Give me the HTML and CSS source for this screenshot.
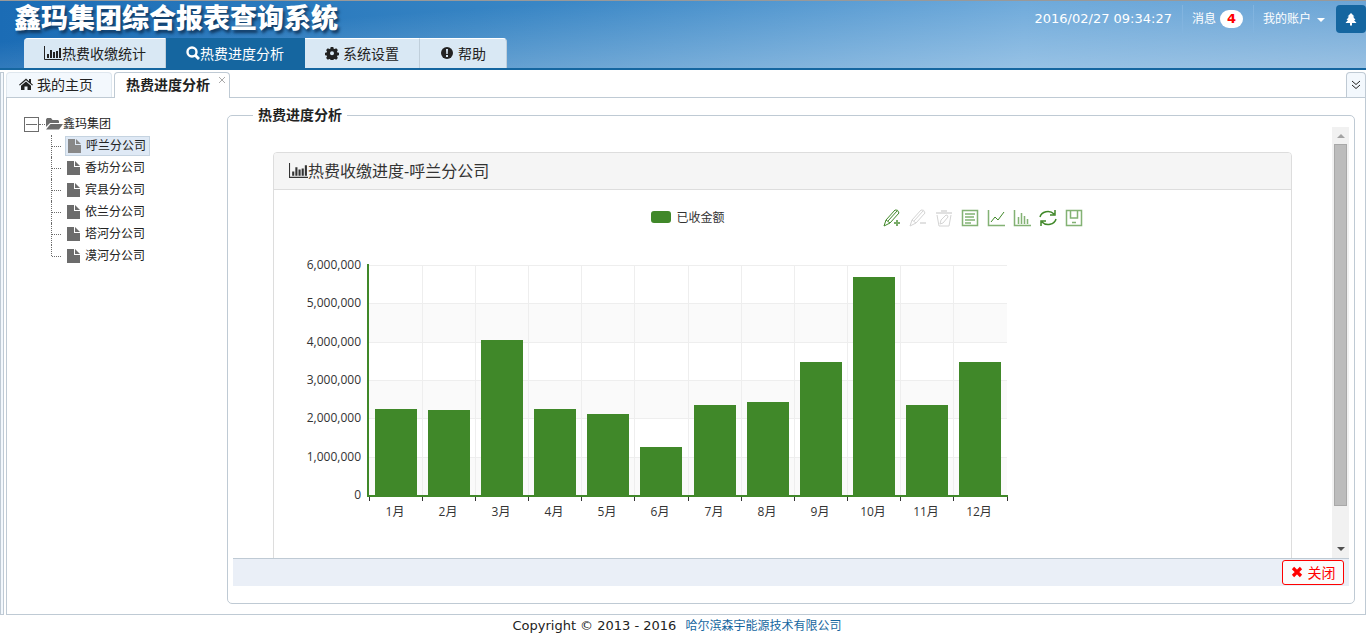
FILE: index.html
```
<!DOCTYPE html>
<html lang="zh-CN">
<head>
    <meta charset="UTF-8">
    <meta name="viewport" content="width=device-width, initial-scale=1.0">
    <title>鑫玛集团综合报表查询系统</title>
    <link rel="stylesheet" href="styles.css">
</head>
<body>
    <!-- shared icons -->
    <svg class="sprite" aria-hidden="true">
        <symbol id="i-chart" viewBox="0 0 18 14"><path d="M.5 0v13.5H18" fill="none" stroke="currentColor"/><path d="M3 8h2v4H3zM6 4h2v8H6zM9 6h2v6H9zM12 5h2v7h-2zM15 2h2v10h-2z"/></symbol>
        <symbol id="i-search" viewBox="0 0 14 14"><path d="M9 9l4 4" stroke="currentColor" stroke-width="3"/><circle cx="6" cy="6" r="4.500" fill="none" stroke="currentColor" stroke-width="2.400"/></symbol>
        <symbol id="i-cog" viewBox="0 0 14 14"><path fill-rule="evenodd" d="M5.700 1h2.600l.4 1.700 1 .4 1.500-.9 1.700 1.700-.9 1.500.4 1 1.600.3v2.600l-1.600.3-.4 1 .9 1.500-1.700 1.700-1.500-.9-1 .4-.4 1.700H5.700l-.4-1.700-1-.4-1.500.9-1.700-1.700.9-1.500-.4-1L0 9.300V6.700l1.600-.3.4-1-.9-1.500 1.700-1.700 1.500.9 1-.4zM7 5.300a2 2 0 1 0 0 4 2 2 0 0 0 0-4z"/></symbol>
        <symbol id="i-warn" viewBox="0 0 14 14"><circle cx="7" cy="7" r="6"/><path d="M6 3h2l-.3 5H6.300zM6 9h2v2H6z" fill="#d9e8f4"/></symbol>
        <symbol id="i-home" viewBox="0 0 14 14"><path d="M7 1.500L10 4.200V2h2v4l2 1.800-.8.8L7 3.300.8 8.600 0 7.800z"/><path d="M7 4.500l5 4.200V13H8.500V9.500h-3V13H2V8.700z"/></symbol>
        <symbol id="i-folder" viewBox="0 0 18 14"><path d="M1 10V2.500L2 1h4l1.500 2H13l1 1v2H5z"/><path d="M5.500 7H18l-4 5.500H1z"/></symbol>
        <symbol id="i-file" viewBox="0 0 14 16"><path d="M0 1h7v6h6v8H0z"/><path d="M8 1l5 5H8z"/></symbol>
        <symbol id="i-tree" viewBox="0 0 14 14"><path d="M7 1l3.500 3.500H9L11.500 8H10l2.500 3H8v2.500H6V11H1.500L4 8H2.500L5 4.500H3.500z"/></symbol>
        <symbol id="i-times" viewBox="0 0 12 12"><path d="M2 2l8 8M10 2l-8 8" stroke="currentColor" stroke-width="3.200"/></symbol>
    </svg>

    <header class="header">
        <div class="brand">鑫玛集团综合报表查询系统</div>
        <div class="userbar">
            <span class="clock">2016/02/27 09:34:27</span>
            <a class="user-item" href="#">消息 <span class="badge">4</span></a>
            <a class="user-item" href="#">我的账户 <span class="caret"></span></a>
            <button class="theme-btn" type="button" aria-label="主题"><svg class="icon"><use href="#i-tree"/></svg></button>
        </div>
        <nav class="nav">
            <a class="tight" href="#"><svg class="icon wide"><use href="#i-chart"/></svg>热费收缴统计</a>
            <a class="tight active" href="#"><svg class="icon"><use href="#i-search"/></svg>热费进度分析</a>
            <a href="#"><svg class="icon"><use href="#i-cog"/></svg>系统设置</a>
            <a href="#"><svg class="icon"><use href="#i-warn"/></svg>帮助</a>
        </nav>
    </header>

    <main class="main">
        <div class="splitter"></div>
        <div class="workspace">
            <div class="tabs">
                <a class="tab" href="#"><svg class="icon"><use href="#i-home"/></svg>我的主页</a>
                <a class="tab current" href="#">热费进度分析<svg class="tab-close" viewBox="0 0 8 8"><path d="M1 1l6 6M7 1L1 7"/></svg></a>
                <button class="tabs-more" type="button" aria-label="更多"><svg viewBox="0 0 10 10"><path d="M1 1l4 3.500L9 1M1 5l4 3.500L9 5"/></svg></button>
            </div>

            <div class="content">
                <div class="tree">
                    <div class="tree-root">
                        <button class="toggle" type="button" aria-label="折叠"></button>
                        <span class="dots"></span>
                        <svg class="icon wide"><use href="#i-folder"/></svg>鑫玛集团
                    </div>
                    <ul>
                        <li><a class="selected" href="#"><svg class="file"><use href="#i-file"/></svg>呼兰分公司</a></li>
                        <li><a href="#"><svg class="file"><use href="#i-file"/></svg>香坊分公司</a></li>
                        <li><a href="#"><svg class="file"><use href="#i-file"/></svg>宾县分公司</a></li>
                        <li><a href="#"><svg class="file"><use href="#i-file"/></svg>依兰分公司</a></li>
                        <li><a href="#"><svg class="file"><use href="#i-file"/></svg>塔河分公司</a></li>
                        <li><a href="#"><svg class="file"><use href="#i-file"/></svg>漠河分公司</a></li>
                    </ul>
                </div>

                <fieldset class="report">
                    <legend>热费进度分析</legend>
                    <div class="report-body">
                        <div class="scroll-area">
                            <section class="panel">
                                <h3><svg class="icon-lg"><use href="#i-chart"/></svg>热费收缴进度-呼兰分公司</h3>
                                <div class="panel-body">
                                    <div class="chart">
                                        <div class="chart-head">
                                            <div class="legend"><span class="swatch"></span>已收金额</div>
                                            <div class="toolbox">
                                                <button type="button" aria-label="辅助线"><svg viewBox="0 0 18 18"><path d="M1 17l2-6L12 1q3-1 4 3L7 14zM3 11l4 3M5 12l9-10"/><path class="bold" d="M14 11v6M11 14h6"/></svg></button>
                                                <button class="off" type="button" aria-label="删除辅助线"><svg viewBox="0 0 18 18"><path d="M1 17l2-6L12 1q3-1 4 3L7 14zM3 11l4 3M5 12l9-10"/><path class="bold" d="M11 14h6"/></svg></button>
                                                <button class="off" type="button" aria-label="清空辅助线"><svg viewBox="0 0 18 18"><path class="bold" d="M1 4h16M6 2h6"/><path d="M2 6l2 11h10l2-11M5 15l1-4 5-5q2 0 2 2l-5 6z"/></svg></button>
                                                <button type="button" aria-label="数据视图"><svg viewBox="0 0 18 18"><path class="soft" d="M1.500 1.500h15v15h-15zM4 5h10M4 8h9M4 11h10M4 14h6"/></svg></button>
                                                <button type="button" aria-label="折线图"><svg viewBox="0 0 18 18"><path class="soft" d="M1.500 1v15.500H18"/><path d="M4 13l4-5 3 3 6-8"/></svg></button>
                                                <button type="button" aria-label="柱状图"><svg viewBox="0 0 18 18"><path class="soft" d="M1.500 1v15.500H18M5.500 8v7M8.500 4v11M11.500 7v8M14.500 10v5"/></svg></button>
                                                <button type="button" aria-label="还原"><svg viewBox="0 0 18 18"><path class="mid" d="M1 8a8 7 0 0 1 14-3M16 1v5h-5M17 10a8 7 0 0 1-14 3M2 17v-5h5"/></svg></button>
                                                <button type="button" aria-label="保存"><svg viewBox="0 0 18 18"><path class="soft" d="M1.500 1.500h15v15h-15zM5.500 2v7h7V2M7 13.500h4"/></svg></button>
                                            </div>
                                        </div>
                                        <svg id="plot" class="plot" viewBox="0 0 800 320"></svg>
                                    </div>
                                </div>
                            </section>
                        </div>
                        <div class="scrollbar"><i class="up"></i><div class="thumb"></div><i class="down"></i></div>
                    </div>
                    <div class="actions">
                        <button class="btn-close" type="button"><svg><use href="#i-times"/></svg>关闭</button>
                    </div>
                </fieldset>
            </div>
        </div>
    </main>

    <footer class="footer">Copyright © 2013 - 2016 <a href="#">哈尔滨森宇能源技术有限公司</a></footer>

    <script src="chart.js"></script>
</body>
</html>
```
FILE: styles.css
```
* {
    box-sizing: border-box;
}

body {
    margin: 0;
    min-height: 100vh;
    display: flex;
    flex-direction: column;
    font-family: "DejaVu Sans", "Noto Sans CJK SC", sans-serif;
    font-size: 12px;
    color: #222;
    background: #fff;
}

a {
    color: inherit;
    text-decoration: none;
}

button {
    font: inherit;
    padding: 0;
    cursor: pointer;
}

svg {
    fill: currentColor;
    flex: none;
}

.sprite {
    display: none;
}

.icon {
    width: 14px;
    height: 14px;
}

.icon.wide {
    width: 18px;
}

/* Header */
.header {
    height: 70px;
    display: grid;
    grid-template: 37px 30px / 1fr auto;
    border-top: 1px solid #999;
    border-bottom: 2px solid #1566a0;
    background:
        linear-gradient(356deg, rgba(255, 255, 255, 0.45), rgba(255, 255, 255, 0) 75%),
        linear-gradient(to right, #1b6cb5, #3583c3 35%, #5c9fd6 75%, #468ecb);
}

.brand {
    padding: 1px 0 0 14px;
    font-size: 27px;
    font-weight: 900;
    line-height: 34px;
    color: #fff;
    text-shadow: 2px 3px 3px #123a62;
    white-space: nowrap;
}

.userbar {
    display: flex;
    height: 28px;
    margin-top: 4px;
    line-height: 28px;
    color: #fff;
}

.clock {
    font-size: 13px;
    padding-right: 10px;
}

.user-item {
    display: flex;
    align-items: center;
    gap: 4px;
    padding: 0 10px 0 9px;
    border-left: 1px solid #82b4df;
}

.user-item:nth-of-type(2) {
    padding-right: 11px;
}

.badge {
    width: 23px;
    height: 18px;
    border-radius: 9px;
    background: #fff;
    color: #f00;
    font-size: 13px;
    font-weight: bold;
    line-height: 18px;
    text-align: center;
}

.caret {
    margin: 2px 0 0 2px;
    border: 4px solid transparent;
    border-top-color: #fff;
    border-bottom: 0;
}

.theme-btn {
    width: 30px;
    display: flex;
    align-items: center;
    justify-content: center;
    border: 0;
    border-radius: 4px;
    background: #1566a0;
    color: #fff;
}

.nav {
    grid-column: 1 / 3;
    display: flex;
    padding-left: 24px;
    font-size: 14px;
}

.nav a {
    display: flex;
    align-items: center;
    gap: 4px;
    padding: 0 20px 2px;
    border-top: 1px solid #fff;
    border-right: 1px solid #c0cfdb;
    background: #d9e8f4;
}

.nav a.tight {
    gap: 0;
}

.nav a:first-child {
    padding-right: 19px;
    border-radius: 4px 0 0 0;
}

.nav a:last-child {
    border-radius: 0 4px 0 0;
}

.nav a.active {
    border-color: #1566a0;
    background: #1566a0;
    color: #fff;
}

/* Workspace */
.main {
    flex: 1;
    display: flex;
    gap: 2px;
    padding-top: 2px;
}

.splitter {
    width: 4px;
    border: 1px solid #bfcad4;
    background: #f3f8fd;
}

.workspace {
    flex: 1;
    min-width: 0;
    display: flex;
    flex-direction: column;
}

.tabs {
    display: flex;
    gap: 2px;
    height: 26px;
    border-bottom: 1px solid #bfcad4;
    font-size: 14px;
}

.tab {
    position: relative;
    display: flex;
    align-items: center;
    gap: 4px;
    padding: 0 18px 2px 12px;
    border: 1px solid #dfe7ee;
    border-bottom: 0;
    border-radius: 4px 4px 0 0;
    background: #f3f8fd;
}

.tab.current {
    margin-bottom: -1px;
    padding: 0 19px 3px 11px;
    border-color: #bfcad4;
    background: #fff;
    font-weight: bold;
}

.tab-close {
    position: absolute;
    top: 3px;
    right: 3px;
    width: 8px;
    height: 8px;
    stroke: #aaa;
}

.tabs-more {
    width: 20px;
    margin-left: auto;
    border: 1px solid #bfcad4;
    border-bottom: 0;
    border-radius: 4px 4px 0 0;
    background: #f3f8fd;
}

.tabs-more svg {
    width: 10px;
    height: 10px;
    fill: none;
    stroke: #222;
}

.content {
    flex: 1;
    display: flex;
    padding: 9px 10px 10px 16px;
    border: 1px solid #bfcad4;
    border-top: 0;
}

/* Tree */
.tree {
    width: 204px;
    padding-top: 6px;
    line-height: 22px;
}

.tree svg {
    color: #6c6c6c;
}

.tree-root {
    display: flex;
    align-items: center;
}

.toggle {
    width: 15px;
    height: 15px;
    margin-left: 1px;
    border: 1px solid #6c6c6c;
    background: linear-gradient(#6c6c6c, #6c6c6c) center / 11px 1px no-repeat #fff;
}

.dots {
    width: 6px;
    border-top: 1px dotted #6c6c6c;
}

.tree ul {
    margin: 0 0 0 28px;
    padding: 0;
    list-style: none;
}

.tree li {
    display: flex;
    align-items: center;
    height: 22px;
    border-left: 1px dotted #6c6c6c;
}

.tree li:last-child {
    border-left: 0;
    padding-left: 1px;
    background: repeating-linear-gradient(#6c6c6c 0 1px, #fff 1px 2px) left top / 1px 11px no-repeat;
}

.tree li::before {
    content: "";
    width: 9px;
    margin-right: 4px;
    border-top: 1px dotted #6c6c6c;
}

.tree a {
    display: flex;
    align-items: center;
    gap: 4px;
    height: 20px;
    padding: 0 4px 0 2px;
}

.tree a.selected {
    padding: 0 3px 0 2px;
    border: 1px solid #c5d3e0;
    background: #dfe9f5;
}

.file {
    width: 14px;
    height: 16px;
}

.tree .selected .file {
    color: #888;
}

/* Report */
.report {
    flex: 1;
    min-width: 0;
    display: flex;
    flex-direction: column;
    margin: 0;
    padding: 4px 5px 17px;
    border: 1px solid #bfcad4;
    border-radius: 5px;
}

.report legend {
    margin-left: 20px;
    padding: 0 5px;
    height: 16px;
    font-size: 14px;
    font-weight: bold;
    line-height: 16px;
}

.report-body {
    flex: 1 1 0;
    min-height: 360px;
    display: flex;
    overflow: hidden;
}

.scroll-area {
    flex: 1;
    min-width: 0;
    padding: 25px 40px 0;
}

.panel {
    border: 1px solid #ddd;
    border-radius: 4px;
    color: #333;
}

.panel h3 {
    display: flex;
    align-items: center;
    height: 37px;
    margin: 0;
    padding: 0 0 2px 15px;
    border-bottom: 1px solid #ddd;
    border-radius: 3px 3px 0 0;
    background: #f5f5f5;
    font-family: "Open Sans", "Noto Sans CJK SC", sans-serif;
    font-size: 16px;
    font-weight: normal;
}

.icon-lg {
    width: 19px;
    height: 15px;
}

.panel-body {
    padding: 15px;
}

.chart {
    width: 800px;
    padding-bottom: 60px;
    font-family: "Open Sans", "Noto Sans CJK SC", sans-serif;
}

.chart-head {
    display: grid;
    grid-template-columns: 1fr auto 1fr;
    align-items: center;
    height: 24px;
    padding: 0 6px 0 4px;
}

.legend {
    grid-column: 2;
    display: flex;
    align-items: center;
    gap: 5px;
}

.swatch {
    width: 20px;
    height: 12px;
    border-radius: 3px;
    background: #408829;
}

.toolbox {
    display: flex;
    justify-content: flex-end;
    gap: 8px;
}

.toolbox button {
    width: 18px;
    height: 18px;
    margin-top: 2px;
    border: 0;
    background: none;
    color: #408829;
}

.toolbox .off {
    color: #d4d4d4;
}

.toolbox svg {
    display: block;
    width: 18px;
    height: 18px;
    fill: none;
    stroke: currentColor;
}

.toolbox .bold {
    stroke-width: 2;
    opacity: 0.7;
}

.toolbox .mid {
    stroke-width: 1.5;
}

.toolbox .soft {
    stroke-width: 1.5;
    opacity: 0.65;
}

.plot {
    display: block;
    width: 800px;
    height: 320px;
    font-size: 12px;
}

.plot .band {
    fill: #fafafa;
}

.plot .grid {
    fill: #eee;
}

.plot .bar,
.plot .axis {
    fill: #408829;
}

.plot .tick,
.plot text {
    fill: #333;
}

.scrollbar {
    width: 17px;
    display: flex;
    flex-direction: column;
    align-items: center;
    background: #f1f1f1;
}

.scrollbar i {
    margin: 7px 0 6px;
    border: 4px solid transparent;
}

.scrollbar .up {
    border-top: 0;
    border-bottom-color: #a3a3a3;
}

.scrollbar .down {
    margin-top: auto;
    margin-bottom: 7px;
    border-bottom: 0;
    border-top-color: #505050;
}

.thumb {
    width: 13px;
    height: 84%;
    border: 1px solid #a8a8a8;
    background: #bcbcbc;
}

.actions {
    display: flex;
    justify-content: flex-end;
    height: 28px;
    padding: 1px 5px 0 0;
    border-top: 1px solid #bfcad4;
    background: #eaeff7;
}

.btn-close {
    display: flex;
    align-items: center;
    justify-content: center;
    gap: 5px;
    width: 62px;
    height: 25px;
    padding-bottom: 1px;
    border: 1px solid #f00;
    border-radius: 3px;
    background: #fbfbfb;
    color: #f00;
    font-size: 14px;
}

.btn-close svg {
    width: 12px;
    height: 12px;
}

.footer {
    height: 20px;
    padding-right: 12px;
    font-size: 13px;
    line-height: 22px;
    text-align: center;
}

.footer a {
    margin-left: 5px;
    color: #1566a0;
    font-size: 12px;
}
```
FILE: chart.js
```
const data = [2243000, 2230000, 4043000, 2243000, 2126000, 1240000, 2348000, 2426000, 3457000, 5674000, 2348000, 3457000];
const plot = document.getElementById('plot');
const left = 80, top0 = 36, width = 638, height = 230, max = 6000000;

function add(tag, attrs, text) {
    const el = document.createElementNS('http://www.w3.org/2000/svg', tag);
    for (const key in attrs) el.setAttribute(key, attrs[key]);
    if (text) el.textContent = text;
    plot.appendChild(el);
}

function rect(cls, x, y, w, h) {
    add('rect', { class: cls, x: x, y: y, width: w, height: h });
}

const rowY = n => top0 + Math.round(height * (6 - n) / 6);
const colX = n => left + Math.floor(width * n / 12);

// bands, horizontal lines and value labels
for (let n = 0; n <= 6; n++) {
    if (n % 2 === 1) rect('band', left, rowY(n), width, rowY(n - 1) - rowY(n));
    rect('grid', left, rowY(n), width, 1);
    add('text', { x: left - 8, y: rowY(n) + 4, 'text-anchor': 'end' }, (n * 1000000).toLocaleString('en-US'));
}

for (let n = 1; n < 12; n++) rect('grid', colX(n), top0, 1, height);

// bars and month labels
data.forEach((value, n) => {
    const h = Math.round(height * value / max);
    rect('bar', colX(n) + 6, top0 + height - h, 42, h);
    add('text', { x: colX(n) + 26, y: top0 + height + 21, 'text-anchor': 'middle' }, (n + 1) + '月');
});

for (let n = 0; n <= 12; n++) rect('tick', colX(n), top0 + height, 1, 6);
rect('axis', left - 2, top0 - 1, 2, height + 2);
rect('axis', left - 2, top0 + height, width + 3, 2);
```
